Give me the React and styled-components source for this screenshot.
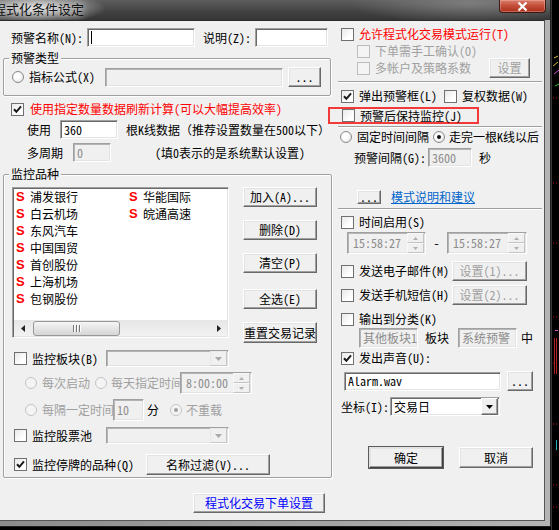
import React from 'react';
import styled, { createGlobalStyle, css } from 'styled-components';

const GlobalStyle = createGlobalStyle`
  html, body {
    margin: 0;
    padding: 0;
    background: #000;
  }
  body {
    font-family: "Noto Sans Mono CJK SC", "Noto Sans CJK SC", sans-serif;
    font-size: 12px;
    line-height: 16px;
    color: #000;
  }
  * {
    box-sizing: border-box;
  }
`;

const tones = {
  normal: '#000000',
  red: '#ff0000',
  gray: '#a0a0a0',
  blue: '#0000ff',
  link: '#0066cc',
};

const Screen = styled.div`
  width: 559px;
  height: 530px;
  display: flex;
  background: #000;
  overflow: hidden;
`;

const Window = styled.div`
  width: 551px;
  height: 527px;
  flex: none;
  display: flex;
  flex-direction: column;
  background: linear-gradient(90deg, #8c8c8c, #b4b4b4);
  border-right: 1px solid #1e1e1e;
  border-bottom: 1px solid #1e1e1e;
  padding-right: 5px;
  padding-bottom: 5px;
`;

const TitleBar = styled.div`
  height: 20px;
  flex: none;
  display: flex;
  align-items: flex-start;
  overflow: hidden;
  margin-right: -5px;
  background:
    radial-gradient(ellipse 70px 16px at 36px 8px, rgba(235, 235, 235, 0.95), rgba(235, 235, 235, 0) 100%),
    radial-gradient(ellipse 120px 20px at 470px 4px, rgba(150, 150, 150, 0.6), rgba(150, 150, 150, 0) 100%),
    linear-gradient(180deg, #5e5e5e 0%, #414141 60%, #353535 100%);
`;

const Title = styled.span`
  flex: none;
  margin-left: -7px;
  margin-top: 1px;
  font-family: "Noto Sans CJK SC", sans-serif;
  font-size: 13px;
  line-height: 16px;
  color: #111;
  white-space: nowrap;
  text-shadow: 0 0 6px rgba(255, 255, 255, 0.9);
`;

const CloseButton = styled.div`
  margin-left: auto;
  margin-right: 4px;
  width: 47px;
  height: 13px;
  border: 1px solid #3a1a14;
  border-top: none;
  border-radius: 0 0 4px 4px;
  background: linear-gradient(180deg, #d9806f 0%, #c5513c 45%, #a92d19 100%);
  box-shadow: inset 0 0 0 1px rgba(255, 200, 190, 0.35);
  display: flex;
  align-items: center;
  justify-content: center;
`;

const Client = styled.div`
  flex: 1;
  display: flex;
  background: #f0f0f0;
  border-top: 1px solid #2c2c2c;
  border-right: 1px solid #555;
  border-bottom: 1px solid #555;
`;

const LeftCol = styled.div`
  width: 336px;
  flex: none;
  display: flex;
  flex-direction: column;
  align-items: flex-start;
  padding-left: 3px;
`;

const RightCol = styled.div`
  flex: 1;
  display: flex;
  flex-direction: column;
  align-items: flex-start;
  padding-left: 5px;
`;

const Row = styled.div`
  display: flex;
  align-items: center;
  flex: none;
  height: ${p => p.$h}px;
  margin-top: ${p => p.$mt || 0}px;
  padding-left: ${p => p.$pl || 0}px;
`;

const Text = styled.span`
  flex: none;
  white-space: nowrap;
  ${p => p.$w && css`width: ${p.$w}px;`}
  ${p => p.$clip && css`overflow: hidden; height: 16px;`}
  margin-left: ${p => p.$ml || 0}px;
  color: ${p => tones[p.$tone || 'normal']};
  ${p => p.$tone === 'link' && css`text-decoration: underline;`}
  ${p => p.$center && css`text-align: center;`}
`;

const Group = styled.div`
  position: relative;
  flex: none;
  width: ${p => p.$w}px;
  height: ${p => p.$h}px;
  margin-top: ${p => p.$mt}px;
  padding: ${p => p.$pt}px 0 0 8px;
  border: 1px solid #a0a0a0;
  border-radius: 2px;
  box-shadow: inset 1px 1px #fff, 1px 1px #fff;
`;

const GroupTitle = styled.span`
  position: absolute;
  top: -9px;
  left: 5px;
  padding: 0 2px;
  background: #f0f0f0;
  white-space: nowrap;
`;

const Separator = styled.div`
  flex: none;
  width: 204px;
  height: 2px;
  margin-left: -3px;
  margin-top: ${p => p.$mt}px;
  border-top: 1px solid #a0a0a0;
  border-bottom: 1px solid #fff;
`;

const Highlight = styled.div`
  flex: none;
  display: flex;
  align-items: center;
  width: 151px;
  height: 17px;
  margin-top: ${p => p.$mt}px;
  margin-left: -13px;
  padding-left: 12px;
  border: 2px solid #f23a3a;
`;

const CheckBox = styled.span`
  flex: none;
  width: 13px;
  height: 13px;
  display: flex;
  align-items: center;
  justify-content: center;
  border: 1px solid ${p => (p.$disabled ? '#bcbcbc' : '#707070')};
  background: ${p => (p.$disabled ? '#f4f4f4' : 'linear-gradient(135deg, #e8e8e8 0%, #ffffff 70%)')};
`;

const RadioDot = styled.span`
  flex: none;
  width: 12px;
  height: 12px;
  margin-left: ${p => p.$ml || 0}px;
  border-radius: 50%;
  display: flex;
  align-items: center;
  justify-content: center;
  border: 1px solid ${p => (p.$disabled ? '#c4c4c4' : '#8a8a8a')};
  background: ${p => (p.$disabled ? '#f4f4f4' : 'radial-gradient(circle at 40% 40%, #ffffff 30%, #dcdcdc 100%)')};

  &::after {
    content: '';
    display: ${p => (p.$checked ? 'block' : 'none')};
    width: 4px;
    height: 4px;
    border-radius: 50%;
    background: ${p => (p.$disabled ? '#a0a0a0' : '#111')};
  }
`;

const Field = styled.div`
  flex: none;
  display: flex;
  align-items: center;
  width: ${p => p.$w}px;
  height: ${p => p.$h || 19}px;
  margin-left: ${p => p.$ml || 0}px;
  padding: 0 0 0 3px;
  overflow: hidden;
  white-space: nowrap;
  background: ${p => (p.$disabled ? '#f0f0f0' : '#ffffff')};
  color: ${p => (p.$disabled ? '#8c8c8c' : '#000')};
  border: 1px solid;
  border-color: #a0a0a0 #ffffff #ffffff #a0a0a0;
  box-shadow: inset 1px 1px ${p => (p.$disabled ? '#b4b4b4' : '#696969')}, inset -1px -1px #e3e3e3;
`;

const FieldText = styled.span`
  flex: 1;
  min-width: 0;
  white-space: nowrap;
  overflow: hidden;
  line-height: 16px;
`;

const Button = styled.div`
  flex: none;
  display: flex;
  align-items: center;
  justify-content: center;
  white-space: nowrap;
  width: ${p => p.$w}px;
  height: ${p => p.$h || 20}px;
  margin-left: ${p => p.$ml || 0}px;
  margin-top: ${p => p.$mt || 0}px;
  background: #f0f0f0;
  color: ${p => tones[p.$tone || (p.$disabled ? 'gray' : 'normal')]};
  border: 1px solid;
  border-color: #ffffff #696969 #696969 #ffffff;
  box-shadow: inset -1px -1px #a0a0a0, inset 1px 1px #e3e3e3;
  ${p => p.$default && css`
    outline: 1px solid #5a5a5a;
    border-color: #e3e3e3 #404040 #404040 #e3e3e3;
  `}
`;

const DropButton = styled.span`
  flex: none;
  width: 17px;
  height: 100%;
  display: flex;
  align-items: center;
  justify-content: center;
  background: #f0f0f0;
  border: 1px solid;
  border-color: ${p => (p.$disabled ? '#e8e8e8 #c8c8c8 #c8c8c8 #e8e8e8' : '#ffffff #696969 #696969 #ffffff')};
  box-shadow: ${p => (p.$disabled ? 'none' : 'inset -1px -1px #a0a0a0')};
`;

const SpinStack = styled.span`
  flex: none;
  width: 17px;
  height: 100%;
  display: flex;
  flex-direction: column;
`;

const SpinHalf = styled.span`
  flex: 1;
  display: flex;
  align-items: center;
  justify-content: center;
  border: 1px solid;
  border-color: #f8f8f8 #c4c4c4 #c4c4c4 #f8f8f8;
  background: #f0f0f0;
`;

const ListBox = styled.div`
  flex: none;
  width: 217px;
  height: 151px;
  display: flex;
  flex-direction: column;
  background: #fff;
  border: 1px solid;
  border-color: #a0a0a0 #ffffff #ffffff #a0a0a0;
  box-shadow: inset 1px 1px #696969, inset -1px -1px #e3e3e3;
  padding: 1px;
`;

const ListItems = styled.div`
  flex: 1;
  display: grid;
  grid-template-columns: 113px 100px;
  grid-template-rows: repeat(7, 17px);
  grid-auto-flow: column;
  align-content: start;
  padding-left: 2px;
  margin-top: -1px;
`;

const ListItem = styled.div`
  display: flex;
  align-items: center;
  white-space: nowrap;
`;

const StockMark = styled.span`
  width: 14px;
  flex: none;
  font-family: "Liberation Sans", Arial, sans-serif;
  font-weight: 700;
  font-size: 13px;
  color: #ff0000;
`;

const ScrollBar = styled.div`
  flex: none;
  height: 16px;
  display: flex;
  align-items: center;
  background: linear-gradient(180deg, #e6e6e6, #f2f2f2);
`;

const ScrollArrow = styled.span`
  flex: none;
  width: 17px;
  height: 16px;
  display: flex;
  align-items: center;
  justify-content: center;
  ${p => p.$end && css`margin-left: auto;`}
`;

const ScrollThumb = styled.span`
  flex: none;
  width: 87px;
  height: 15px;
  margin-left: 2px;
  border: 1px solid #989898;
  border-radius: 3px;
  background: linear-gradient(180deg, #f6f6f6 0%, #e4e4e4 50%, #d6d6d6 100%);
  display: flex;
  align-items: center;
  justify-content: center;
  gap: 2px;
`;

const Grip = styled.span`
  width: 1px;
  height: 7px;
  background: #777;
  box-shadow: 1px 0 #fff;
`;

const ButtonColumn = styled.div`
  display: flex;
  flex-direction: column;
  margin-left: 14px;
`;

const ListRow = styled.div`
  display: flex;
  align-items: flex-start;
`;

const ChartStrip = styled.div`
  flex: 1;
  height: 530px;
  background: #000;
`;

const Tick = () => (
  <svg width="9" height="9" viewBox="0 0 9 9">
    <path d="M1 4.2 L3.4 6.8 L8 1.4" stroke="#1a1a1a" strokeWidth="2" fill="none" />
  </svg>
);

const Check = ({ checked, disabled }) => (
  <CheckBox $disabled={disabled}>{checked && <Tick />}</CheckBox>
);

const Triangle = ({ dir = 'down', color = '#000', size = 7 }) => {
  const h = Math.ceil(size / 2);
  const d = dir === 'up'
    ? `M0 ${h} L${size} ${h} L${size / 2} 0 Z`
    : `M0 0 L${size} 0 L${size / 2} ${h} Z`;
  return (
    <svg width={size} height={h} viewBox={`0 0 ${size} ${h}`}>
      <path d={d} fill={color} />
    </svg>
  );
};

const SideArrow = ({ dir }) => (
  <svg width="4" height="7" viewBox="0 0 4 7">
    <path d={dir === 'left' ? 'M4 0 L0 3.5 L4 7 Z' : 'M0 0 L4 3.5 L0 7 Z'} fill="#222" />
  </svg>
);

const Combo = ({ w, h, text, disabled }) => (
  <Field $w={w} $h={h} $disabled={disabled} style={{ paddingRight: 1 }}>
    <FieldText>{text}</FieldText>
    <DropButton $disabled={disabled}>
      <Triangle color={disabled ? '#a8a8a8' : '#000'} size={7} />
    </DropButton>
  </Field>
);

const Spin = ({ w, text }) => (
  <Field $w={w} $h={22} $disabled style={{ paddingRight: 1, paddingLeft: 5 }}>
    <FieldText>{text}</FieldText>
    <SpinStack>
      <SpinHalf><Triangle dir="up" color="#b0b0b0" size={5} /></SpinHalf>
      <SpinHalf><Triangle color="#b0b0b0" size={5} /></SpinHalf>
    </SpinStack>
  </Field>
);

const stocks = ['浦发银行', '白云机场', '东风汽车', '中国国贸', '首创股份', '上海机场', '包钢股份', '华能国际', '皖通高速'];

const chartMarks = [98, 183, 243, 317, 363, 424, 485, 507];

export default function App() {
  return (
    <>
      <GlobalStyle />
      <Screen>
        <Window>
          <TitleBar>
            <Title>程式化条件设定</Title>
            <CloseButton>
              <svg width="11" height="9" viewBox="0 0 11 9">
                <path d="M1.5 0.5 L9.5 8.5 M9.5 0.5 L1.5 8.5" stroke="#fff" strokeWidth="2.2" />
              </svg>
            </CloseButton>
          </TitleBar>
          <Client>
            <LeftCol>
              <Row $h={19} $mt={7} $pl={8}>
                <Text $w={76}>预警名称(N):</Text>
                <Field $w={108}>
                  <svg width="1" height="13"><rect width="1" height="13" fill="#000" /></svg>
                </Field>
                <Text $w={52} $ml={8}>说明(Z):</Text>
                <Field $w={73} />
              </Row>

              <Group $w={328} $h={38} $mt={11} $pt={8}>
                <GroupTitle>预警类型</GroupTitle>
                <Row $h={20}>
                  <RadioDot />
                  <Text $w={76} $ml={5}>指标公式(X)</Text>
                  <Field $w={178} $disabled />
                  <Button $w={33} $ml={5}>...</Button>
                </Row>
              </Group>

              <Row $h={14} $mt={6} $pl={8}>
                <Check checked />
                <Text $ml={6} $tone="red">使用指定数量数据刷新计算(可以大幅提高效率)</Text>
              </Row>
              <Row $h={19} $mt={4} $pl={24}>
                <Text $w={33}>使用</Text>
                <Field $w={58}><FieldText>360</FieldText></Field>
                <Text $ml={8}>根K线数据（推荐设置数量在500以下）</Text>
              </Row>
              <Row $h={19} $mt={4} $pl={24}>
                <Text $w={46}>多周期</Text>
                <Field $w={38} $disabled><FieldText>0</FieldText></Field>
                <Text $ml={44}>(填0表示的是系统默认设置)</Text>
              </Row>

              <Group $w={329} $h={304} $mt={12} $pt={12}>
                <GroupTitle>监控品种</GroupTitle>
                <ListRow>
                  <ListBox>
                    <ListItems>
                      {stocks.map(name => (
                        <ListItem key={name}>
                          <StockMark>S</StockMark>
                          <span>{name}</span>
                        </ListItem>
                      ))}
                    </ListItems>
                    <ScrollBar>
                      <ScrollArrow><SideArrow dir="left" /></ScrollArrow>
                      <ScrollThumb><Grip /><Grip /><Grip /></ScrollThumb>
                      <ScrollArrow $end><SideArrow dir="right" /></ScrollArrow>
                    </ScrollBar>
                  </ListBox>
                  <ButtonColumn>
                    <Button $w={74}>加入(A)...</Button>
                    <Button $w={74} $mt={13}>删除(D)</Button>
                    <Button $w={74} $mt={13}>清空(P)</Button>
                    <Button $w={74} $mt={16}>全选(E)</Button>
                    <Button $w={74} $h={21} $mt={13}>重置交易记录</Button>
                  </ButtonColumn>
                </ListRow>

                <Row $h={17} $mt={7} $pl={2}>
                  <Check />
                  <Text $w={74} $ml={5}>监控板块(B)</Text>
                  <Combo w={123} h={17} disabled />
                </Row>
                <Row $h={22} $mt={5} $pl={13}>
                  <RadioDot $disabled />
                  <Text $w={53} $ml={5} $tone="gray">每次启动</Text>
                  <RadioDot $disabled />
                  <Text $w={69} $ml={4} $tone="gray" $clip>每天指定时间</Text>
                  <Spin w={72} text="8:00:00" />
                </Row>
                <Row $h={22} $mt={5} $pl={13}>
                  <RadioDot $disabled />
                  <Text $w={71} $ml={5} $tone="gray" $clip>每隔一定时间</Text>
                  <Field $w={31} $h={22} $disabled><FieldText>10</FieldText></Field>
                  <Text $ml={3}>分</Text>
                  <RadioDot $disabled $checked $ml={11} />
                  <Text $ml={4} $tone="gray">不重载</Text>
                </Row>
                <Row $h={17} $mt={6} $pl={2}>
                  <Check />
                  <Text $w={74} $ml={5}>监控股票池</Text>
                  <Combo w={123} h={17} disabled />
                </Row>
                <Row $h={21} $mt={10} $pl={2}>
                  <Check checked />
                  <Text $w={114} $ml={5}>监控停牌的品种(Q)</Text>
                  <Button $w={124} $h={21}>名称过滤(V)...</Button>
                </Row>
              </Group>

              <Button $w={132} $h={20} $mt={15} $ml={190} $tone="blue">程式化交易下单设置</Button>
            </LeftCol>

            <RightCol>
              <Row $h={14} $mt={6}>
                <Check />
                <Text $ml={5} $tone="red">允许程式化交易模式运行(T)</Text>
              </Row>
              <Row $h={14} $mt={3} $pl={16}>
                <Check disabled />
                <Text $ml={5} $tone="gray">下单需手工确认(O)</Text>
              </Row>
              <Row $h={20} $pl={16}>
                <Check disabled />
                <Text $w={114} $ml={5} $tone="gray">多帐户及策略系数</Text>
                <Button $w={41} $disabled>设置</Button>
              </Row>
              <Separator $mt={3} />
              <Row $h={14} $mt={6}>
                <Check checked />
                <Text $w={85} $ml={5}>弹出预警框(L)</Text>
                <Check />
                <Text $ml={5}>复权数据(W)</Text>
              </Row>
              <Highlight $mt={4}>
                <Check />
                <Text $ml={5}>预警后保持监控(J)</Text>
              </Highlight>
              <Separator $mt={2} />
              <Row $h={14} $mt={2}>
                <RadioDot $ml={-1} />
                <Text $w={76} $ml={5}>固定时间间隔</Text>
                <RadioDot $checked />
                <Text $ml={4}>走完一根K线以后</Text>
              </Row>
              <Row $h={19} $mt={4} $pl={13}>
                <Text $w={74}>预警间隔(G):</Text>
                <Field $w={44} $disabled><FieldText>3600</FieldText></Field>
                <Text $ml={7}>秒</Text>
              </Row>
              <Row $h={14} $mt={23} $pl={16}>
                <Button $w={24} $h={14}>...</Button>
                <Text $ml={10} $tone="link">模式说明和建议</Text>
              </Row>
              <Separator $mt={4} />
              <Row $h={14} $mt={5}>
                <Check />
                <Text $ml={5}>时间启用(S)</Text>
              </Row>
              <Row $h={22} $mt={3} $pl={6}>
                <Spin w={79} text="15:58:27" />
                <Text $w={21} $center>-</Text>
                <Spin w={80} text="15:58:27" />
              </Row>
              <Row $h={20} $mt={7}>
                <Check />
                <Text $w={93} $ml={5}>发送电子邮件(M)</Text>
                <Button $w={75} $disabled>设置(1)...</Button>
              </Row>
              <Row $h={20} $mt={4}>
                <Check />
                <Text $w={93} $ml={5}>发送手机短信(H)</Text>
                <Button $w={75} $disabled>设置(2)...</Button>
              </Row>
              <Row $h={14} $mt={7}>
                <Check />
                <Text $ml={5}>输出到分类(K)</Text>
              </Row>
              <Row $h={20} $mt={2} $pl={18}>
                <Field $w={59} $h={20} $disabled><FieldText>其他板块1</FieldText></Field>
                <Text $w={33} $ml={7}>板块</Text>
                <Field $w={59} $h={20} $disabled><FieldText>系统预警</FieldText></Field>
                <Text $ml={4}>中</Text>
              </Row>
              <Row $h={14} $mt={3}>
                <Check checked />
                <Text $ml={5}>发出声音(U):</Text>
              </Row>
              <Row $h={20} $mt={6} $pl={3}>
                <Field $w={157}><FieldText>Alarm.wav</FieldText></Field>
                <Button $w={26} $ml={6}>...</Button>
              </Row>
              <Row $h={19} $mt={6}>
                <Text $w={49}>坐标(I):</Text>
                <Combo w={110} h={19} text="交易日" />
              </Row>
              <Row $h={21} $mt={31} $pl={28}>
                <Button $w={74} $h={21} $default>确定</Button>
                <Button $w={74} $h={21} $ml={16}>取消</Button>
              </Row>
            </RightCol>
          </Client>
        </Window>
        <ChartStrip>
          <svg width="8" height="530" viewBox="0 0 8 530">
            <rect x="0" y="0" width="1" height="530" fill="#3a3a3a" />
            <path d="M3 58 L7 56 M2 66 L7 62" stroke="#d8c040" strokeWidth="1" />
            <path d="M3 74 L8 70" stroke="#d050d0" strokeWidth="1" />
            <path d="M4 86 L8 84" stroke="#30c030" strokeWidth="1" />
            {chartMarks.map(y => (
              <path key={y} d={`M2 ${y} H3 M5 ${y} H6`} stroke="#c01818" strokeWidth="1" />
            ))}
            <rect x="4" y="330" width="3" height="1" fill="#d050d0" />
            <rect x="3" y="338" width="1" height="36" fill="#b02020" />
            <rect x="5" y="338" width="1" height="36" fill="#b02020" />
            <rect x="5" y="440" width="1" height="10" fill="#20b0b0" />
          </svg>
        </ChartStrip>
      </Screen>
    </>
  );
}
